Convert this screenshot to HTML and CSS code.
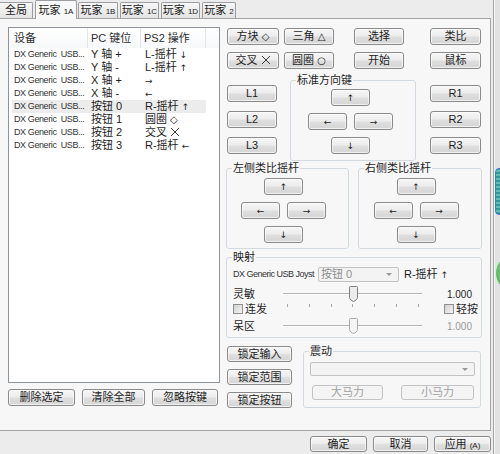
FILE: index.html
```html
<!DOCTYPE html>
<html lang="zh-CN">
<head>
<meta charset="utf-8">
<title>手柄设置</title>
<link rel="stylesheet" href="styles.css">
</head>
<body>
<div class="screen">
  <div class="dialog">
    <div class="tabs">
      <div class="tab tab-all">全局</div>
      <div class="tab tab-a active">玩家 <span class="lat">1A</span></div>
      <div class="tab tab-b">玩家 <span class="lat">1B</span></div>
      <div class="tab tab-c">玩家 <span class="lat">1C</span></div>
      <div class="tab tab-d">玩家 <span class="lat">1D</span></div>
      <div class="tab tab-2">玩家 <span class="lat">2</span></div>
    </div>
    <div class="panel">
      <div class="leftcol">
        <div class="list">
          <div class="lhead">
            <div class="hc c1">设备</div>
            <div class="hc c2">PC <span>键位</span></div>
            <div class="hc c3">PS2 操作</div>
            <div class="hc c4"></div>
          </div>
          <div class="row"><span class="c1 dev">DX Generic&nbsp;&nbsp;USB...</span><span class="c2">Y 轴 +</span><span class="c3">L-摇杆 <i class="ar">↓</i></span></div>
          <div class="row"><span class="c1 dev">DX Generic&nbsp;&nbsp;USB...</span><span class="c2">Y 轴 -</span><span class="c3">L-摇杆 <i class="ar">↑</i></span></div>
          <div class="row"><span class="c1 dev">DX Generic&nbsp;&nbsp;USB...</span><span class="c2">X 轴 +</span><span class="c3"><i class="ar">→</i></span></div>
          <div class="row"><span class="c1 dev">DX Generic&nbsp;&nbsp;USB...</span><span class="c2">X 轴 -</span><span class="c3"><i class="ar">←</i></span></div>
          <div class="row sel"><span class="c1 dev">DX Generic&nbsp;&nbsp;USB...</span><span class="c2">按钮 0</span><span class="c3">R-摇杆 <i class="ar">↑</i></span></div>
          <div class="row"><span class="c1 dev">DX Generic&nbsp;&nbsp;USB...</span><span class="c2">按钮 1</span><span class="c3">圆圈 <i class="sym">◇</i></span></div>
          <div class="row"><span class="c1 dev">DX Generic&nbsp;&nbsp;USB...</span><span class="c2">按钮 2</span><span class="c3">交叉 <svg class="xic" width="10" height="10" viewBox="0 0 10 10"><path d="M1 1L9 9M9 1L1 9" stroke="#3a3a3a" stroke-width="1" fill="none"/></svg></span></div>
          <div class="row"><span class="c1 dev">DX Generic&nbsp;&nbsp;USB...</span><span class="c2">按钮 3</span><span class="c3">R-摇杆 <i class="ar">←</i></span></div>
        </div>
        <div class="lbtns">
          <button class="btn w67">删除选定</button>
          <button class="btn w63">清除全部</button>
          <button class="btn w66">忽略按键</button>
        </div>
      </div>

      <div class="rightcol">
        <div class="brow r1">
          <button class="btn b-sq">方块 <i class="sym">◇</i></button>
          <button class="btn b-tri">三角 <i class="sym">△</i></button>
          <button class="btn b-sel">选择</button>
          <button class="btn b-ana">类比</button>
        </div>
        <div class="brow r2">
          <button class="btn b-sq">交叉 <svg class="xic" width="10" height="10" viewBox="0 0 10 10"><path d="M1 1L9 9M9 1L1 9" stroke="#3a3a3a" stroke-width="1" fill="none"/></svg></button>
          <button class="btn b-tri">圆圈 <i class="sym">○</i></button>
          <button class="btn b-sel">开始</button>
          <button class="btn b-ana">鼠标</button>
        </div>

        <div class="dpadrow">
          <div class="shoulders sh-l">
            <button class="btn">L1</button>
            <button class="btn">L2</button>
            <button class="btn">L3</button>
          </div>
          <fieldset class="grp dpad">
            <legend>标准方向键</legend>
            <div class="cross">
              <button class="btn"><i class="ar">↑</i></button>
              <div class="mid"><button class="btn"><i class="ar">←</i></button><button class="btn"><i class="ar">→</i></button></div>
              <button class="btn"><i class="ar">↓</i></button>
            </div>
          </fieldset>
          <div class="shoulders sh-r">
            <button class="btn">R1</button>
            <button class="btn">R2</button>
            <button class="btn">R3</button>
          </div>
        </div>

        <div class="sticks">
          <fieldset class="grp stick st-l">
            <legend>左侧类比摇杆</legend>
            <div class="cross">
              <button class="btn"><i class="ar">↑</i></button>
              <div class="mid"><button class="btn"><i class="ar">←</i></button><button class="btn"><i class="ar">→</i></button></div>
              <button class="btn"><i class="ar">↓</i></button>
            </div>
          </fieldset>
          <fieldset class="grp stick st-r">
            <legend>右侧类比摇杆</legend>
            <div class="cross">
              <button class="btn"><i class="ar">↑</i></button>
              <div class="mid"><button class="btn"><i class="ar">←</i></button><button class="btn"><i class="ar">→</i></button></div>
              <button class="btn"><i class="ar">↓</i></button>
            </div>
          </fieldset>
        </div>

        <fieldset class="grp map">
          <legend>映射</legend>
          <div class="mapin">
            <div class="maprow">
              <span class="devname">DX Generic USB Joyst</span>
              <div class="combo cb-map"><span>按钮 0</span><i class="caret"></i></div>
              <span class="target">R-摇杆 <i class="ar">↑</i></span>
            </div>
            <div class="slrow">
              <span class="sllabel">灵敏</span>
              <div class="slider"><i class="thumb"><svg width="9" height="16" viewBox="0 0 9 16"><path d="M1.5 .5h6a1 1 0 0 1 1 1v10c0 1.5-2 3.3-4 4c-2-.7-4-2.5-4-4V1.5a1 1 0 0 1 1-1z" fill="#ececec" stroke="#7f7f7f"/></svg></i></div>
              <span class="val">1.000</span>
            </div>
            <div class="chkrow">
              <span class="chk"><i class="box"></i>连发</span>
              <div class="ticks"><i></i><i></i><i></i><i></i><i></i><i></i><i></i></div>
              <span class="chk chk-r"><i class="box"></i>轻按</span>
            </div>
            <div class="slrow sl2">
              <span class="sllabel">呆区</span>
              <div class="slider"><i class="thumb"><svg width="9" height="16" viewBox="0 0 9 16"><path d="M1.5 .5h6a1 1 0 0 1 1 1v10c0 1.5-2 3.3-4 4c-2-.7-4-2.5-4-4V1.5a1 1 0 0 1 1-1z" fill="#f4f4f4" stroke="#a8a8a8"/></svg></i></div>
              <span class="val dim">1.000</span>
            </div>
          </div>
        </fieldset>

        <div class="bottomrow">
          <div class="locks">
            <button class="btn">锁定输入</button>
            <button class="btn">锁定范围</button>
            <button class="btn">锁定按钮</button>
          </div>
          <fieldset class="grp rumble">
            <legend>震动</legend>
            <div class="rumin">
              <div class="combo cb-wide"><i class="caret"></i></div>
              <div class="rbtns">
                <button class="btn dis big">大马力</button>
                <button class="btn dis small">小马力</button>
              </div>
            </div>
          </fieldset>
        </div>
      </div>
    </div>
    <div class="footer">
      <button class="btn f-ok">确定</button>
      <button class="btn f-cancel">取消</button>
      <button class="btn f-apply">应用 <span class="lat">(A)</span></button>
    </div>
  </div>
  <div class="side">
    <div class="blue"></div>
    <div class="green"></div>
  </div>
</div>
</body>
</html>
```
FILE: styles.css
```css
* { box-sizing: border-box; }
html, body { margin: 0; padding: 0; }
body {
  width: 500px; height: 454px; overflow: hidden;
  background: #ececec;
  font-family: "Liberation Sans", "Noto Sans CJK SC", sans-serif;
  font-size: 11px; line-height: 13px; color: #1e1e1e;
}
i { font-style: normal; }
.screen { display: flex; height: 454px; }
.dialog {
  width: 494px; flex: none; display: flex; flex-direction: column;
  border-right: 1px solid #a4a4a4; background: #ececec;
}
.side { flex: 1; position: relative; overflow: hidden; background: #e2e2e2; border-left: 1px solid #f7f7f7; }
.side .blue {
  position: absolute; left: 0; top: 168px; width: 20px; height: 47px;
  border: 1px solid #3b7cc6; border-radius: 4px;
  background: repeating-linear-gradient(0deg, #2f9a9a 0 2px, #5cc0b8 2px 4px);
}
.side .green {
  position: absolute; left: 0; top: 254px; width: 38px; height: 38px; border-radius: 50%;
  border: 1px solid #cfe9cf;
  background: radial-gradient(circle at 40% 40%, #8ad88a, #2f9a3f);
}

/* tabs */
.tabs { height: 18px; flex: none; display: flex; align-items: flex-end; position: relative; z-index: 1; }
.tab {
  height: 16px; line-height: 14px; text-align: center; white-space: nowrap;
  border: 1px solid #9b9da3; border-bottom: none; border-radius: 2px 2px 0 0;
  background: linear-gradient(#f7f7f7, #e4e4e4); color: #222; margin-right: 2px;
}
.lat { font-family: "Liberation Sans", sans-serif; font-size: 8px; }
.tab-all { width: 33px; border-left: none; border-radius: 0 2px 0 0; }
.tab-a { width: 42px; margin-right: 1px; }
.tab-b { width: 40px; }
.tab-c { width: 39px; }
.tab-d { width: 39px; }
.tab-2 { width: 34px; }
.tab.active { height: 19px; margin-bottom: -1px; padding-top: 2px; line-height: 15px; background: #f8f8f8; }

/* panel */
.panel {
  height: 413px; width: 491px; flex: none; display: flex;
  border: 1px solid #a6a6a6; border-left: none;
  background: #f7f7f7; padding: 8px 0 0 8px;
}
.leftcol { width: 212px; margin-right: 6px; display: flex; flex-direction: column; }
.list { height: 356px; background: #fff; border: 1px solid #8f949b; }
.lhead { display: flex; height: 20px; background: linear-gradient(#ffffff, #f7f8fa); }
.hc { line-height: 20px; border-right: 1px solid #e2e5e9; color: #2e2e2e; }
.lhead .c4 { flex: 1; border-right: none; }
.c1 { width: 79px; padding-left: 5px; flex: none; }
.c2 { width: 53px; padding-left: 3px; flex: none; }
.c3 { width: 65px; padding-left: 3px; flex: none; }
.row { display: flex; height: 13px; line-height: 13px; width: 197px; white-space: nowrap; }
.row .c3 { padding-left: 4px; }
.row.sel { background: linear-gradient(90deg, transparent 3px, #ececec 3px); }
.dev, .devname {
  font-family: "Liberation Sans", sans-serif;
  font-size: 9px; letter-spacing: -0.4px; color: #333; white-space: nowrap;
}
.dev { overflow: hidden; }
.ar { font-family: "DejaVu Sans", sans-serif; font-size: 9px; }
.sym { font-family: "DejaVu Sans", sans-serif; font-size: 10px; }
.xic { display: inline-block; vertical-align: -1px; }

.lbtns { display: flex; gap: 7px; margin-top: 6px; }
.w67 { width: 67px; } .w63 { width: 63px; } .w66 { width: 66px; }

/* buttons */
.btn {
  font: inherit; font-size: 11px; color: #1e1e1e; margin: 0; padding: 0;
  height: 17px; line-height: 15px; text-align: center; white-space: nowrap; flex: none;
  border: 1px solid #8a8a8a; border-radius: 3px;
  background: linear-gradient(#f6f6f6 0%, #ededed 45%, #dedede 55%, #d5d5d5 100%);
  box-shadow: inset 0 0 0 1px rgba(255,255,255,.65);
}
.btn.dis { border-color: #c3c3c3; background: #f4f4f4; color: #a2a2a2; box-shadow: none; }

/* right column */
.rightcol { width: 256px; display: flex; flex-direction: column; }
.brow { display: flex; height: 17px; }
.brow.r1 { margin-top: 1px; }
.brow.r2 { margin-top: 7px; }
.b-sq { width: 52px; margin-left: 1px; }
.b-tri { width: 50px; margin-left: 5px; }
.b-sel { width: 50px; margin-left: 20px; }
.b-ana { width: 51px; margin-left: 26px; }

.grp {
  margin: 0; padding: 0; min-width: 0;
  border: 1px solid #d2dae1; border-radius: 3px; background: transparent;
}
.grp legend { padding: 0 1px; margin-left: 5px; line-height: 12px; font-size: 11px; color: #1e1e1e; }

.dpadrow { display: flex; margin-top: 5px; height: 87px; }
.shoulders { display: flex; flex-direction: column; gap: 9px; margin-top: 11px; }
.sh-l { width: 50px; margin-left: 1px; }
.sh-r { width: 51px; margin-left: 14px; }
.shoulders .btn { width: 100%; }
.dpad { width: 126px; height: 87px; margin-left: 13px; }

.cross { display: flex; flex-direction: column; align-items: center; gap: 7px; }
.cross .mid { display: flex; gap: 7px; }
.cross .btn { width: 39px; }
.dpad .cross { padding: 3px 5px 0 0; }

.sticks { display: flex; gap: 9px; margin-top: 1px; }
.stick { height: 87px; }
.st-l { width: 123px; }
.st-r { width: 124px; }
.stick .cross { padding: 4px 8px 0 0; }

.map { width: 256px; height: 87px; margin-top: 2px; }
.mapin { padding: 4px 9px 0 6px; }
.maprow { display: flex; align-items: center; height: 15px; white-space: nowrap; }
.devname { width: 85px; flex: none; letter-spacing: -0.5px; }
.combo {
  position: relative; flex: none; height: 15px; line-height: 13px;
  border: 1px solid #c3c3c3; border-radius: 2px; background: #f3f3f3; color: #8e8e8e; padding-left: 2px;
}
.cb-map { width: 81px; }
.caret {
  position: absolute; right: 6px; top: 5px; width: 0; height: 0;
  border-left: 3px solid transparent; border-right: 3px solid transparent; border-top: 3px solid #9a9a9a;
}
.target { margin-left: 5px; }

.slrow { display: flex; align-items: center; height: 16px; margin-top: 4px; }
.slrow.sl2 { margin-top: 2px; }
.sllabel { width: 50px; flex: none; }
.slider {
  position: relative; width: 139px; height: 16px; flex: none;
  background:
    linear-gradient(#b4b4b4, #b4b4b4) 0 7px / 100% 1px no-repeat,
    linear-gradient(#ffffff, #ffffff) 0 8px / 100% 1px no-repeat;
}
.thumb { position: absolute; left: 66px; top: 0; width: 9px; height: 16px; }
.thumb svg { display: block; }
.val { flex: 1; text-align: right; font-size: 10px; }
.val.dim { color: #9a9a9a; }

.chkrow { display: flex; height: 14px; align-items: center; }
.chk { display: flex; align-items: center; white-space: nowrap; }
.chkrow > .chk:first-child { width: 50px; flex: none; }
.box {
  width: 10px; height: 10px; margin-right: 2px; flex: none;
  border: 1px solid #8e8f8f; background: linear-gradient(135deg, #cfcfcf, #f5f5f5);
}
.ticks { width: 139px; flex: none; display: flex; justify-content: space-between; padding: 0 3px 0 4px; align-self: flex-start; margin-top: 2px; }
.ticks i { width: 1px; height: 3px; background: #a8a8a8; }
.chk-r { margin-left: 22px; }

.bottomrow { display: flex; margin-top: 7px; }
.locks { width: 65px; margin-left: 1px; display: flex; flex-direction: column; gap: 7px; padding-top: 1px; }
.locks .btn { width: 100%; height: 16px; line-height: 14px; }
.rumble { width: 178px; height: 63px; margin-left: 11px; }
.rumin { padding: 5px 0 0 6px; }
.cb-wide { width: 165px; height: 14px; }
.rbtns { display: flex; margin-top: 9px; }
.rbtns .btn { height: 15px; line-height: 13px; }
.big { width: 71px; margin-left: 2px; }
.small { width: 73px; margin-left: 18px; }

/* footer */
.footer { flex: 1; display: flex; justify-content: flex-end; gap: 6px; padding: 5px 2px 0 0; }
.footer .btn { height: 16px; line-height: 14px; }
.f-ok { width: 57px; }
.f-cancel { width: 55px; }
.f-apply { width: 57px; }
```
